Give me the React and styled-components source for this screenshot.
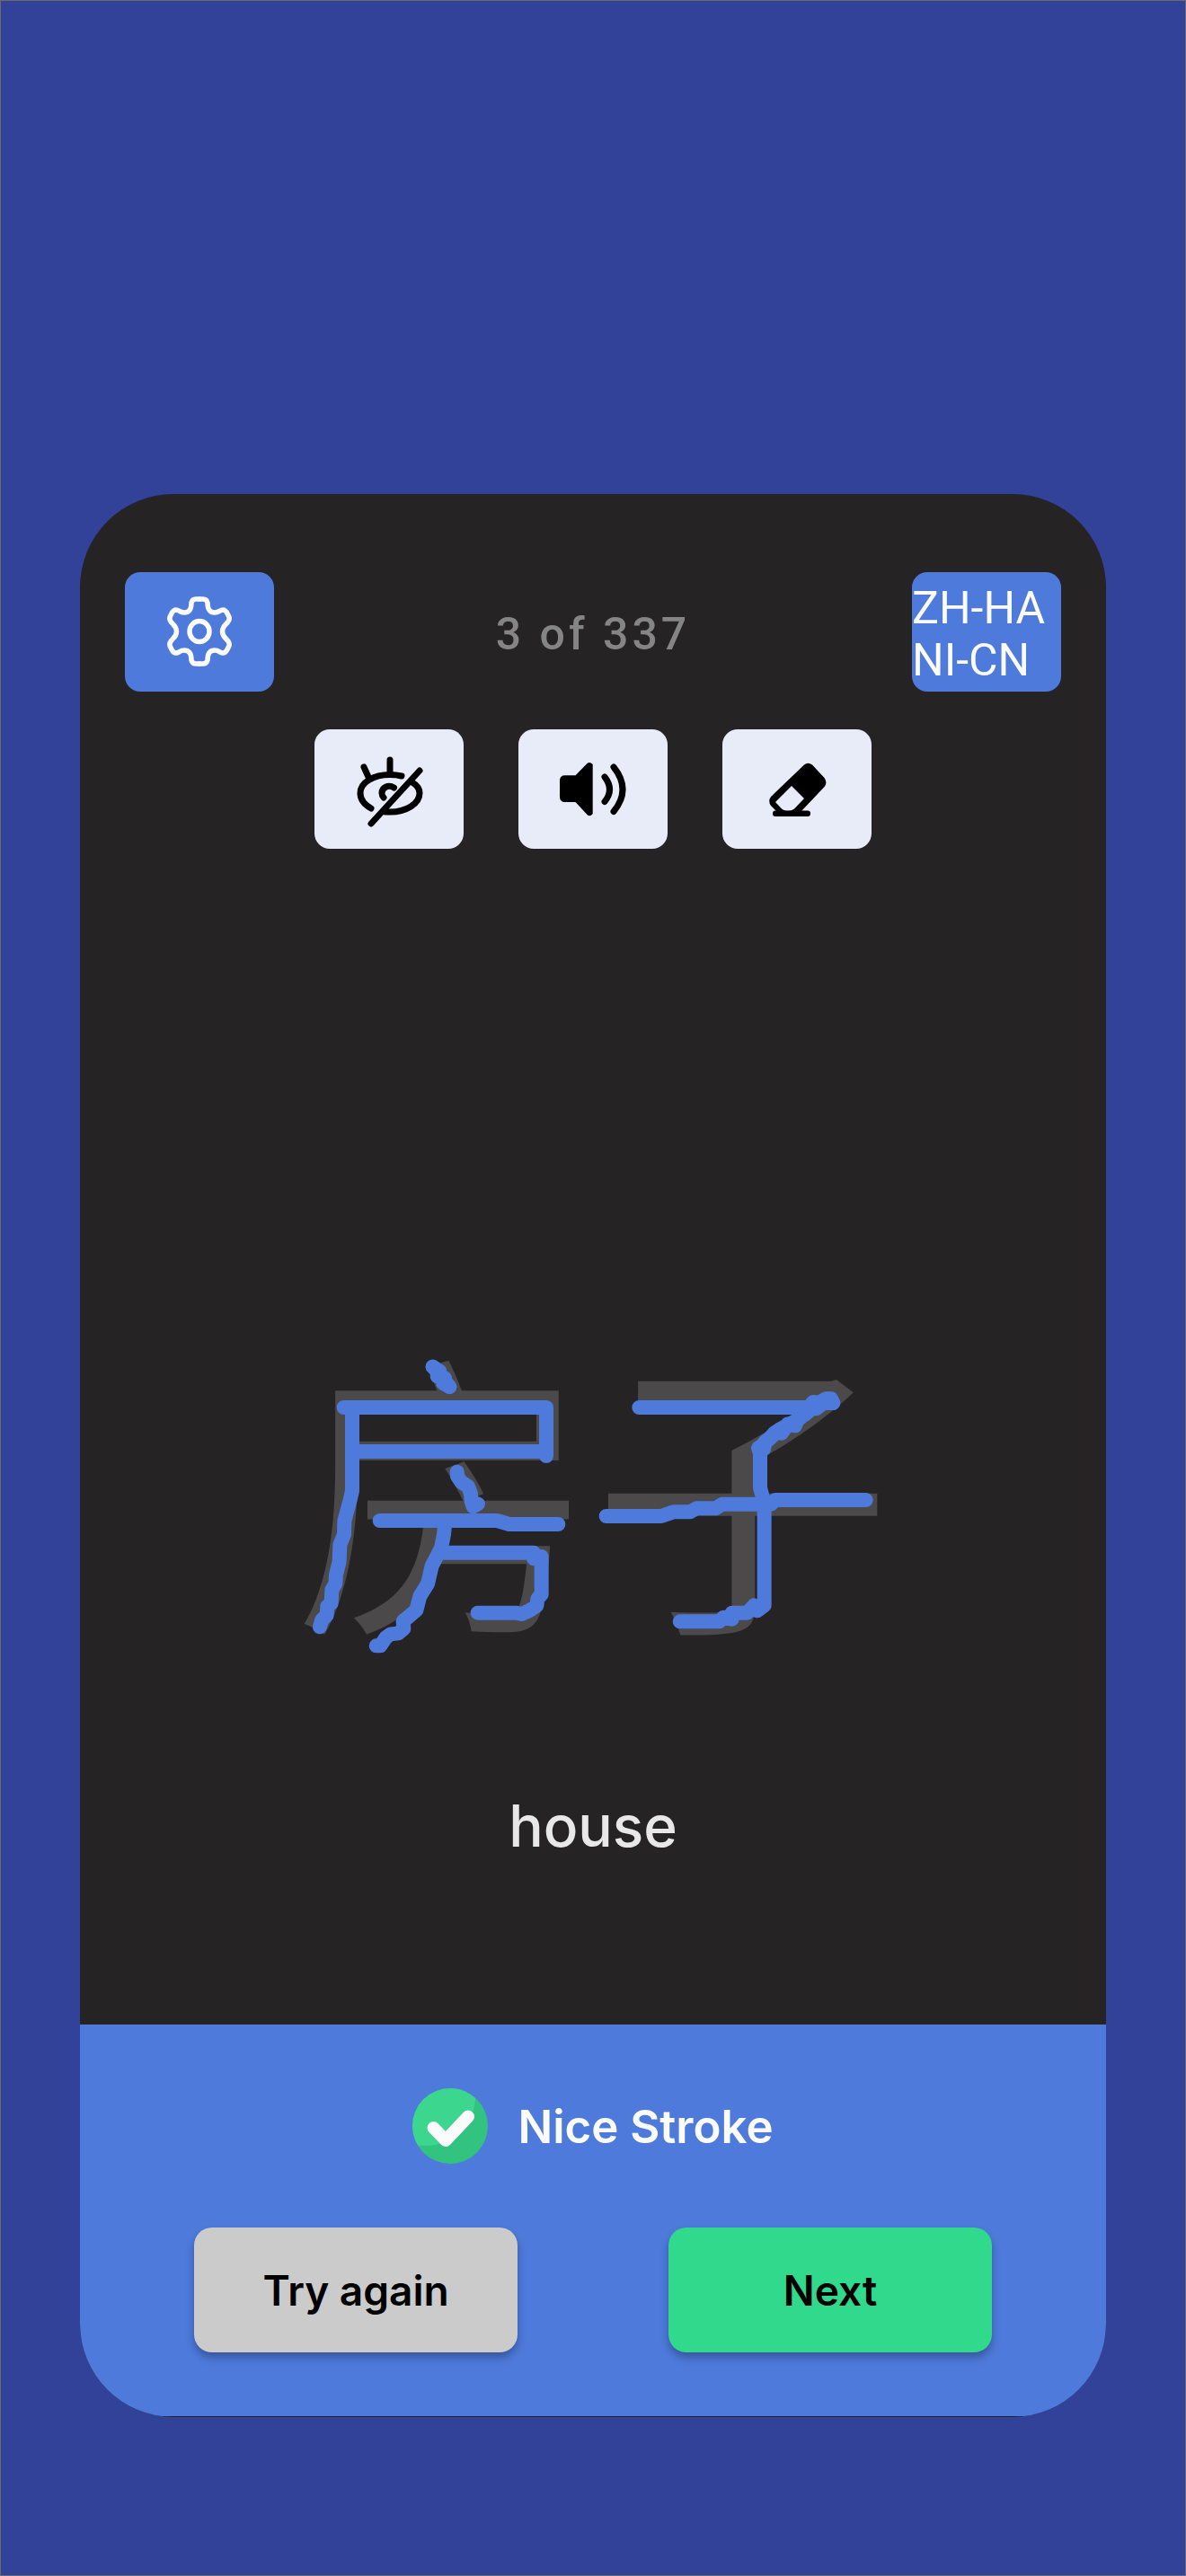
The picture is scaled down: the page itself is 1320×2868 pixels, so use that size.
import React from "react";
import styled, { createGlobalStyle } from "styled-components";

const color = {
  page: "#334299",
  card: "#252324",
  primary: "#4d7adb",
  tool: "#e8ecf8",
  guide: "#4b4949",
  muted: "#858585",
  light: "#e8e8e8",
  white: "#fbfbfc",
};

const GlobalStyle = createGlobalStyle`
  *, *::before, *::after { box-sizing: border-box; }
  body { margin: 0; background: ${color.page}; }
  button { font: inherit; color: inherit; border: 0; padding: 0; cursor: pointer; }
`;

const Page = styled.div`
  min-height: 100vh;
  padding: 549px 88px 175px;
  border: 1px solid #6b6b6b;
  background: ${color.page};
  font-family: Inter, "Liberation Sans", sans-serif;
`;

const Card = styled.main`
  display: flex;
  flex-direction: column;
  padding-bottom: 1px;
  border-radius: 104px;
  overflow: hidden;
  background: ${color.card};
`;

const TopBar = styled.header`
  display: flex;
  align-items: center;
  justify-content: space-between;
  padding: 87px 50px 0;
  font-family: Roboto, "Liberation Sans", sans-serif;
  font-size: 50px;
`;

const Tile = styled.button`
  display: flex;
  align-items: center;
  width: 166px;
  height: 133px;
  border-radius: 17px;
  background: ${(p) => (p.$tone === "primary" ? color.primary : color.tool)};
  color: ${(p) => (p.$tone === "primary" ? color.white : "#000")};
`;

const LanguageTile = styled(Tile)`
  padding-top: 4px;
  line-height: 58px;
  text-align: left;
  word-break: break-all;
`;

const Progress = styled.p`
  margin: 0;
  padding-top: 4px;
  color: ${color.muted};
  font-weight: 500;
  letter-spacing: 4px;
`;

const Toolbar = styled.div`
  display: flex;
  justify-content: center;
  gap: 61px;
  margin-top: 42px;
`;

const Canvas = styled.section`
  position: relative;
  display: flex;
  justify-content: center;
  margin-top: 545px;
`;

const Guide = styled.div`
  color: ${color.guide};
  font-family: "Noto Sans CJK SC", sans-serif;
  font-size: 332px;
  line-height: 320px;
  white-space: nowrap;
`;

const Ink = styled.svg`
  position: absolute;
  top: 0;
  left: 50%;
  width: 680px;
  height: 370px;
  margin-left: -340px;
  fill: none;
  stroke: ${color.primary};
  stroke-width: 48;
  stroke-linecap: round;
  stroke-linejoin: round;
`;

const Meaning = styled.p`
  margin: 184px 0 182px;
  color: ${color.light};
  font-size: 64px;
  line-height: 78px;
  font-weight: 500;
  text-align: center;
`;

const Result = styled.footer`
  display: flex;
  flex-direction: column;
  align-items: center;
  gap: 71px;
  padding: 71px 50px;
  background: ${color.primary};
`;

const Verdict = styled.div`
  display: flex;
  align-items: center;
  gap: 33px;
  color: ${color.white};
  font-size: 51px;
  font-weight: 600;
`;

const Actions = styled.div`
  display: flex;
  gap: 168px;
`;

const Action = styled.button`
  width: 360px;
  height: 139px;
  border-radius: 20px;
  background: ${(p) => (p.$primary ? "#30d98b" : "#cbcbcb")};
  box-shadow: 0 6px 10px rgba(0, 0, 0, 0.28);
  color: #000;
  font-size: 46px;
  font-weight: 600;
`;

const TileIcon = styled.svg.attrs({ viewBox: "0 0 166 133", "aria-hidden": true })`
  width: 166px;
  height: 133px;
  fill: none;
  stroke: currentColor;
  stroke-width: ${(p) => p.$weight || 7};
  stroke-linecap: round;
  stroke-linejoin: round;
`;

const gearHalf =
  "M0-36H4Q8-36 9-32C9-25 11-21 17-21C22-21 23-24 26-24C29-24 30-22 31-20L33-16C35-9 25.500-9 25.500 0C25.500 9 35 9 33 16L31 20C30 22 29 24 26 24C23 24 22 21 17 21C11 21 9 25 9 32Q8 36 4 36H0";

function GearIcon() {
  return (
    <TileIcon $weight={5.5}>
      <g transform="translate(83 66)">
        <path d={gearHalf} />
        <path d={gearHalf} transform="scale(-1 1)" />
        <ellipse rx="11" ry="11.500" />
      </g>
    </TileIcon>
  );
}

function HideIcon() {
  return (
    <TileIcon>
      <path d="M84 34V49M55 42L60 53M117 46L63 105" />
      <path d="M97 52C93 51 88 50.500 84 50.500C66 50.500 51 59 51 71C51 78 56 84 63 88" />
      <path d="M108 58.500C114 62 117 66 117 71C117 83 102 92 84 92H79" />
      <path d="M88.500 65C82 61 75 65 75 71Q75 74 77 76" />
    </TileIcon>
  );
}

function SpeakerIcon() {
  return (
    <TileIcon>
      <path
        fill="currentColor"
        stroke="none"
        d="M52 51.300H63.500L76.500 38Q79.500 35.500 82.700 39V94Q79.500 98 76.500 95L63.500 81H52Q46 81 46 75V57Q46 51.300 52 51.300Z"
      />
      <path d="M96 53Q107 67 96 80.500M106 42Q126 67 106 91.500" />
    </TileIcon>
  );
}

function EraserIcon() {
  return (
    <TileIcon>
      <g fill="currentColor" stroke="none">
        <path
          fillRule="evenodd"
          d="M91 39.500Q95.500 36 100 39.500L113.500 54Q117 59 114 63.500L88 91H60L54 85Q50.500 80 54 75ZM77 63L59 81L66 88.500Q73 93.500 80 88.500L91 77Z"
        />
        <rect x="56" y="90.500" width="42" height="6.500" rx="3" />
      </g>
    </TileIcon>
  );
}

const CheckSvg = styled.svg`
  width: 84px;
  height: 84px;
`;

function CheckIcon() {
  return (
    <CheckSvg viewBox="0 0 84 84" aria-hidden="true">
      <clipPath id="disc">
        <circle cx="42" cy="42" r="42" />
      </clipPath>
      <g clipPath="url(#disc)">
        <rect width="84" height="84" fill="#33c381" />
        <circle cx="15" cy="9" r="55" fill="#3dd68f" />
      </g>
      <path
        d="M23.500 44L37 58L62 31.500"
        fill="none"
        stroke={color.white}
        strokeWidth="14"
        strokeLinecap="round"
        strokeLinejoin="round"
      />
    </CheckSvg>
  );
}

const firstCharacter = [
  "M485 95L508 110L500 127L525 133L520 150L541 162",
  "M485 95L515 130L541 162",
  "M188 231H864V393",
  "M216 378H850",
  "M216 240V509L209 540L190 610L189 655L175 690L173 745L162 790L160 820L148 840L146 885L133 895L131 925L115 940L108 964",
  "M566 446L567 460L580 480L603 495L612 520L614 545L620 562L636 553",
  "M308 609H700L740 621H904",
  "M525 625L522 655L513 700L482 760L468 820L442 862L430 908L410 925L386 945L388 970L370 985L345 988L328 1000L310 1027H296",
  "M520 716H822L822 736L848 729V855L835 870L832 893L810 908L782 921L762 917H635",
];

const secondCharacter = [
  "M214 231H780L795 213L815 215L838 202H855L862 216H830L805 235H790L770 253L750 255L735 292L710 287L690 317L675 310L665 317L650 335L635 345L630 370L612 366L618 385V500L632 550V892L608 910L598 892L575 917H524V938L495 932L482 946H350",
  "M855 208L800 225L745 272L685 303L622 360",
  "M104 594H288L328 580H384L405 568H469L492 554H655L668 540H971",
];

export default function App() {
  return (
    <>
      <GlobalStyle />
      <Page>
        <Card>
          <TopBar>
            <Tile type="button" $tone="primary" aria-label="Settings">
              <GearIcon />
            </Tile>
            <Progress>3 of 337</Progress>
            <LanguageTile type="button" $tone="primary">
              ZH-HANI-CN
            </LanguageTile>
          </TopBar>
          <Toolbar>
            <Tile type="button" aria-label="Hide character">
              <HideIcon />
            </Tile>
            <Tile type="button" aria-label="Play sound">
              <SpeakerIcon />
            </Tile>
            <Tile type="button" aria-label="Erase">
              <EraserIcon />
            </Tile>
          </Toolbar>
          <Canvas>
            <Guide lang="zh-Hans">房子</Guide>
            <Ink viewBox="0 0 2040 1110" aria-hidden="true">
              {firstCharacter.map((d) => (
                <path key={d} d={d} />
              ))}
              <g transform="translate(960 0)">
                {secondCharacter.map((d) => (
                  <path key={d} d={d} />
                ))}
              </g>
            </Ink>
          </Canvas>
          <Meaning>house</Meaning>
          <Result>
            <Verdict>
              <CheckIcon />
              <span>Nice Stroke</span>
            </Verdict>
            <Actions>
              <Action type="button">Try again</Action>
              <Action type="button" $primary>
                Next
              </Action>
            </Actions>
          </Result>
        </Card>
      </Page>
    </>
  );
}
